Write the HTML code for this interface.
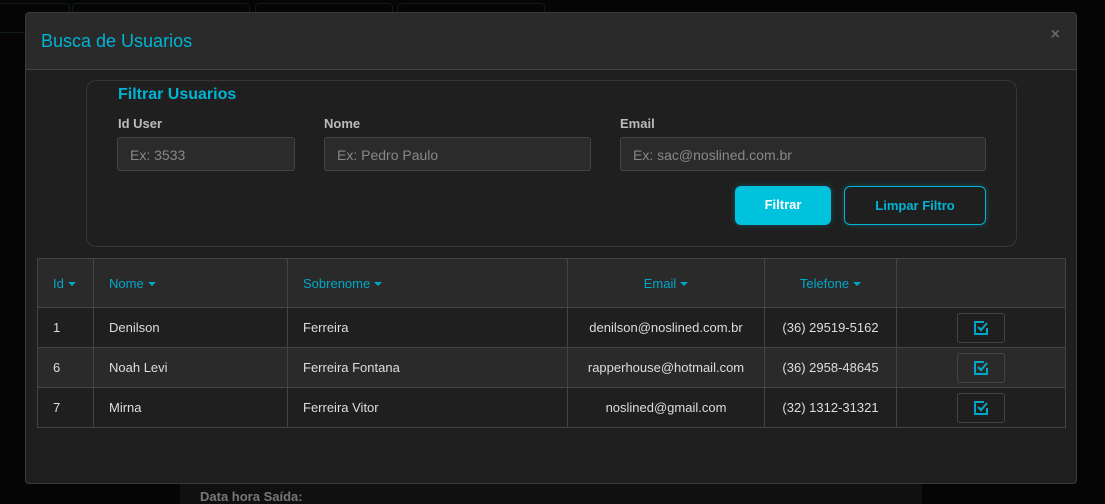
<!DOCTYPE html>
<html><head><meta charset="utf-8"><style>
*{box-sizing:border-box;margin:0;padding:0}
body{width:1105px;height:504px;background:#050505;font-family:"Liberation Sans","DejaVu Sans",sans-serif;position:relative;overflow:hidden;color:#ddd}
.abs{position:absolute}
.modal{left:25px;top:12px;width:1052px;height:472px;background:#1f1f1f;border:1px solid #3a3a3a;border-radius:4px;overflow:hidden}
.hdr{position:absolute;left:0;top:0;width:100%;height:57px;background:#2a2a2a;border-bottom:1px solid #444}
.hdr h1{position:absolute;left:15px;top:18px;font-weight:normal;font-size:18px;color:#00b4d4}
.x{position:absolute;right:16px;top:13px;font-size:16px;font-weight:bold;color:#666}
.filt{left:60px;top:67px;width:931px;height:167px;border:1px solid #363636;border-radius:10px}
.lbl{font-size:13px;font-weight:bold;color:#bbb}
.inp{height:34px;background:#2b2b2b;border:1px solid #444;border-radius:3px;font-size:14px;color:#888;padding:9px 12px}
.btn{height:39px;border-radius:6px;font-size:13px;font-weight:bold;text-align:center;line-height:37px}
table{position:absolute;left:11px;top:245px;width:1029px;border-collapse:collapse;font-size:13px}
td,th{border:1px solid #444;height:40px;padding:0 15px;font-weight:normal;text-align:left}
th{height:49px;color:#00a8c8;background:#2a2a2a}
tr:nth-child(odd) td{background:#2a2a2a}
.c{text-align:center}
.car{display:inline-block;border-left:4px solid transparent;border-right:4px solid transparent;border-top:4px solid #00a8c8;vertical-align:middle;margin-left:4px}
.cb{display:inline-block;width:48px;height:30px;border:1px solid #444;border-radius:3px;vertical-align:middle;padding-top:6px;text-align:center}
.tb{border:1px solid #0f1a1c;border-radius:4px;height:30px;top:3px}
</style></head><body>
<div class="abs tb" style="left:-5px;width:75px"></div>
<div class="abs tb" style="left:72px;width:178px"></div>
<div class="abs tb" style="left:255px;width:138px"></div>
<div class="abs tb" style="left:397px;width:148px"></div>
<div class="abs" style="left:180px;top:484px;width:742px;height:20px;background:#101010"></div>
<div class="abs" style="left:200px;top:489px;font-size:13px;font-weight:bold;color:#777">Data hora Saída:</div>
<div class="abs modal">
 <div class="hdr"><h1>Busca de Usuarios</h1><div class="x">×</div></div>
 <div class="abs filt">
  <div class="abs" style="left:31px;top:5px;font-size:16px;font-weight:bold;color:#00b4d4">Filtrar Usuarios</div>
  <div class="abs lbl" style="left:31px;top:35px">Id User</div>
  <div class="abs lbl" style="left:237px;top:35px">Nome</div>
  <div class="abs lbl" style="left:533px;top:35px">Email</div>
  <div class="abs inp" style="left:30px;top:56px;width:178px">Ex: 3533</div>
  <div class="abs inp" style="left:237px;top:56px;width:267px">Ex: Pedro Paulo</div>
  <div class="abs inp" style="left:533px;top:56px;width:366px">Ex: sac@noslined.com.br</div>
  <div class="abs btn" style="left:648px;top:105px;width:96px;background:#00c2dc;color:#fff;box-shadow:0 0 6px #00b4d455">Filtrar</div>
  <div class="abs btn" style="left:757px;top:105px;width:142px;border:1px solid #00b4d4;color:#00b4d4;box-shadow:0 0 6px #00b4d455">Limpar Filtro</div>
 </div>
 <table>
  <tr><th style="width:56px">Id<span class="car"></span></th><th style="width:194px">Nome<span class="car"></span></th><th style="width:280px">Sobrenome<span class="car"></span></th><th class="c" style="width:197px">Email<span class="car"></span></th><th class="c" style="width:132px">Telefone<span class="car"></span></th><th></th></tr>
  <tr><td>1</td><td>Denilson</td><td>Ferreira</td><td class="c">denilson@noslined.com.br</td><td class="c">(36) 29519-5162</td><td class="c"><span class="cb"><svg width="16" height="16" viewBox="0 0 16 16"><path d="M14 8v6H2V2h9" fill="none" stroke="#00a8c8" stroke-width="2"/><path d="M5 7l3 3 6-7" fill="none" stroke="#00a8c8" stroke-width="2"/></svg></span></td></tr>
  <tr><td>6</td><td>Noah Levi</td><td>Ferreira Fontana</td><td class="c">rapperhouse@hotmail.com</td><td class="c">(36) 2958-48645</td><td class="c"><span class="cb"><svg width="16" height="16" viewBox="0 0 16 16"><path d="M14 8v6H2V2h9" fill="none" stroke="#00a8c8" stroke-width="2"/><path d="M5 7l3 3 6-7" fill="none" stroke="#00a8c8" stroke-width="2"/></svg></span></td></tr>
  <tr><td>7</td><td>Mirna</td><td>Ferreira Vitor</td><td class="c">noslined@gmail.com</td><td class="c">(32) 1312-31321</td><td class="c"><span class="cb"><svg width="16" height="16" viewBox="0 0 16 16"><path d="M14 8v6H2V2h9" fill="none" stroke="#00a8c8" stroke-width="2"/><path d="M5 7l3 3 6-7" fill="none" stroke="#00a8c8" stroke-width="2"/></svg></span></td></tr>
 </table>
</div>
</body></html>
